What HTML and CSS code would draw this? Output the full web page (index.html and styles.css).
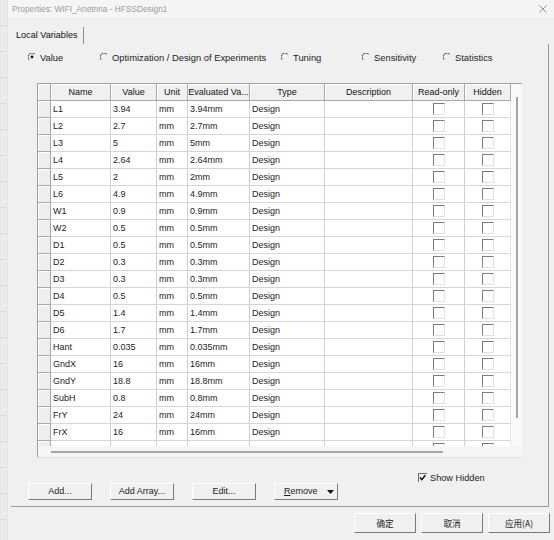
FILE: index.html
```html
<!DOCTYPE html>
<html>
<head>
<meta charset="utf-8">
<title>Properties</title>
<link rel="stylesheet" href="styles.css">
</head>
<body>
<div class="screen">
  <div class="behind"></div>
  <div class="dialog">
    <div class="titlebar">
      <span class="title">Properties: WIFI_Anetnna - HFSSDesign1</span>
      <svg class="close" viewBox="0 0 8 8" width="8" height="8"><path d="M0.5 0.5 L7.5 7.5 M7.5 0.5 L0.5 7.5" stroke="#8a8a8a" stroke-width="0.9" fill="none"/></svg>
    </div>
    <div class="tabs"><div class="tab">Local Variables</div></div>
    <div class="panel">
      <div class="radios">
        <div class="radio r1"><svg viewBox="0 0 8 8" width="8" height="8"><path d="M1.2 6.8 A3.9 3.9 0 0 1 6.8 1.2" stroke="#555" stroke-width="1" fill="none"/><circle cx="4" cy="4" r="1.4" fill="#111"/></svg><span>Value</span></div>
        <div class="radio r2"><svg viewBox="0 0 8 8" width="8" height="8"><path d="M1.2 6.8 A3.9 3.9 0 0 1 6.8 1.2" stroke="#555" stroke-width="1" fill="none"/></svg><span>Optimization / Design of Experiments</span></div>
        <div class="radio r3"><svg viewBox="0 0 8 8" width="8" height="8"><path d="M1.2 6.8 A3.9 3.9 0 0 1 6.8 1.2" stroke="#555" stroke-width="1" fill="none"/></svg><span>Tuning</span></div>
        <div class="radio r4"><svg viewBox="0 0 8 8" width="8" height="8"><path d="M1.2 6.8 A3.9 3.9 0 0 1 6.8 1.2" stroke="#555" stroke-width="1" fill="none"/></svg><span>Sensitivity</span></div>
        <div class="radio r5"><svg viewBox="0 0 8 8" width="8" height="8"><path d="M1.2 6.8 A3.9 3.9 0 0 1 6.8 1.2" stroke="#555" stroke-width="1" fill="none"/></svg><span>Statistics</span></div>
      </div>

      <div class="grid">
        <div class="grid-body">
          <div class="viewport">
            <table class="vars">
              <colgroup>
                <col class="c-rh"><col class="c-name"><col class="c-value"><col class="c-unit"><col class="c-eval"><col class="c-type"><col class="c-desc"><col class="c-ro"><col class="c-hid">
              </colgroup>
              <thead>
                <tr><th class="rh"></th><th>Name</th><th>Value</th><th>Unit</th><th>Evaluated Va...</th><th>Type</th><th>Description</th><th>Read-only</th><th>Hidden</th></tr>
              </thead>
              <tbody>
                <tr><td class="rh"></td><td>L1</td><td>3.94</td><td>mm</td><td>3.94mm</td><td>Design</td><td></td><td class="ck"><span class="cb"></span></td><td class="ck last"><span class="cb"></span></td></tr>
                <tr><td class="rh"></td><td>L2</td><td>2.7</td><td>mm</td><td>2.7mm</td><td>Design</td><td></td><td class="ck"><span class="cb"></span></td><td class="ck last"><span class="cb"></span></td></tr>
                <tr><td class="rh"></td><td>L3</td><td>5</td><td>mm</td><td>5mm</td><td>Design</td><td></td><td class="ck"><span class="cb"></span></td><td class="ck last"><span class="cb"></span></td></tr>
                <tr><td class="rh"></td><td>L4</td><td>2.64</td><td>mm</td><td>2.64mm</td><td>Design</td><td></td><td class="ck"><span class="cb"></span></td><td class="ck last"><span class="cb"></span></td></tr>
                <tr><td class="rh"></td><td>L5</td><td>2</td><td>mm</td><td>2mm</td><td>Design</td><td></td><td class="ck"><span class="cb"></span></td><td class="ck last"><span class="cb"></span></td></tr>
                <tr><td class="rh"></td><td>L6</td><td>4.9</td><td>mm</td><td>4.9mm</td><td>Design</td><td></td><td class="ck"><span class="cb"></span></td><td class="ck last"><span class="cb"></span></td></tr>
                <tr><td class="rh"></td><td>W1</td><td>0.9</td><td>mm</td><td>0.9mm</td><td>Design</td><td></td><td class="ck"><span class="cb"></span></td><td class="ck last"><span class="cb"></span></td></tr>
                <tr><td class="rh"></td><td>W2</td><td>0.5</td><td>mm</td><td>0.5mm</td><td>Design</td><td></td><td class="ck"><span class="cb"></span></td><td class="ck last"><span class="cb"></span></td></tr>
                <tr><td class="rh"></td><td>D1</td><td>0.5</td><td>mm</td><td>0.5mm</td><td>Design</td><td></td><td class="ck"><span class="cb"></span></td><td class="ck last"><span class="cb"></span></td></tr>
                <tr><td class="rh"></td><td>D2</td><td>0.3</td><td>mm</td><td>0.3mm</td><td>Design</td><td></td><td class="ck"><span class="cb"></span></td><td class="ck last"><span class="cb"></span></td></tr>
                <tr><td class="rh"></td><td>D3</td><td>0.3</td><td>mm</td><td>0.3mm</td><td>Design</td><td></td><td class="ck"><span class="cb"></span></td><td class="ck last"><span class="cb"></span></td></tr>
                <tr><td class="rh"></td><td>D4</td><td>0.5</td><td>mm</td><td>0.5mm</td><td>Design</td><td></td><td class="ck"><span class="cb"></span></td><td class="ck last"><span class="cb"></span></td></tr>
                <tr><td class="rh"></td><td>D5</td><td>1.4</td><td>mm</td><td>1.4mm</td><td>Design</td><td></td><td class="ck"><span class="cb"></span></td><td class="ck last"><span class="cb"></span></td></tr>
                <tr><td class="rh"></td><td>D6</td><td>1.7</td><td>mm</td><td>1.7mm</td><td>Design</td><td></td><td class="ck"><span class="cb"></span></td><td class="ck last"><span class="cb"></span></td></tr>
                <tr><td class="rh"></td><td>Hant</td><td>0.035</td><td>mm</td><td>0.035mm</td><td>Design</td><td></td><td class="ck"><span class="cb"></span></td><td class="ck last"><span class="cb"></span></td></tr>
                <tr><td class="rh"></td><td>GndX</td><td>16</td><td>mm</td><td>16mm</td><td>Design</td><td></td><td class="ck"><span class="cb"></span></td><td class="ck last"><span class="cb"></span></td></tr>
                <tr><td class="rh"></td><td>GndY</td><td>18.8</td><td>mm</td><td>18.8mm</td><td>Design</td><td></td><td class="ck"><span class="cb"></span></td><td class="ck last"><span class="cb"></span></td></tr>
                <tr><td class="rh"></td><td>SubH</td><td>0.8</td><td>mm</td><td>0.8mm</td><td>Design</td><td></td><td class="ck"><span class="cb"></span></td><td class="ck last"><span class="cb"></span></td></tr>
                <tr><td class="rh"></td><td>FrY</td><td>24</td><td>mm</td><td>24mm</td><td>Design</td><td></td><td class="ck"><span class="cb"></span></td><td class="ck last"><span class="cb"></span></td></tr>
                <tr><td class="rh"></td><td>FrX</td><td>16</td><td>mm</td><td>16mm</td><td>Design</td><td></td><td class="ck"><span class="cb"></span></td><td class="ck last"><span class="cb"></span></td></tr>
                <tr><td class="rh"></td><td></td><td></td><td></td><td></td><td></td><td></td><td class="ck"><span class="cb"></span></td><td class="ck last"><span class="cb"></span></td></tr>
              </tbody>
            </table>
          </div>
          <div class="vscroll"><div class="vthumb"></div></div>
        </div>
        <div class="hscroll"><div class="hthumb"></div></div>
      </div>

      <div class="showhidden">
        <svg viewBox="0 0 9 9" width="9" height="9"><path d="M0.5 9 V0.5 H9" stroke="#6a6a6a" stroke-width="1" fill="none"/><path d="M2 4.6 L3.8 6.6 L7.3 2.2" stroke="#111" stroke-width="1.5" fill="none"/></svg>
        <span>Show Hidden</span>
      </div>

      <div class="actions">
        <button class="btn">Add...</button>
        <button class="btn">Add Array...</button>
        <button class="btn">Edit...</button>
        <button class="btn remove"><span><u>R</u>emove</span><svg viewBox="0 0 7 4" width="7" height="4"><path d="M0 0 H7 L3.5 4 Z" fill="#111"/></svg></button>
      </div>
    </div>

    <div class="footer">
      <button class="btn fbtn">确定</button>
      <button class="btn fbtn">取消</button>
      <button class="btn fbtn">应用(A)</button>
    </div>
  </div>
</div>
</body>
</html>
```

FILE: styles.css
```css
* { box-sizing: border-box; }

html, body {
  margin: 0;
  padding: 0;
}

body {
  width: 554px;
  height: 540px;
  overflow: hidden;
  background: #f0f0f0;
  font-family: "Liberation Sans", Arial, "Noto Sans CJK SC", sans-serif;
  font-size: 9px;
  color: #1c1c1c;
}

.screen {
  display: flex;
  height: 540px;
}

.behind {
  width: 8px;
  flex: none;
  background: repeating-linear-gradient(to bottom, #ebebeb 0, #ebebeb 25px, #d9d9d9 25px, #d9d9d9 26px);
  border-right: 1px solid #e4e4e4;
}

.dialog {
  flex: 1;
  display: flex;
  flex-direction: column;
  background: #f0f0f0;
}

.titlebar {
  height: 19px;
  display: flex;
  align-items: center;
  justify-content: space-between;
  padding: 0 7px 0 4px;
  background: #f5f5f5;
  border-bottom: 1px solid #ebebeb;
}

.title {
  font-size: 8.3px;
  color: #9c9c9c;
}

.close { display: block; }

.tabs {
  height: 25px;
  padding-left: 3px;
  display: flex;
  align-items: flex-end;
}

.tab {
  width: 73px;
  height: 17px;
  padding-left: 5px;
  border-right: 1px solid #8c8c8c;
  line-height: 16px;
  font-size: 9.1px;
  color: #111;
}

.panel {
  margin-left: 3px;
  width: 538px;
  height: 463px;
  border-right: 1px solid #9a9a9a;
  border-bottom: 1px solid #9a9a9a;
  padding-left: 17px;
}

.radios {
  margin-top: 7px;
  height: 12px;
  display: flex;
  align-items: center;
  font-size: 9.4px;
}

.radio {
  display: flex;
  align-items: center;
  gap: 4px;
}

.radio svg { display: block; flex: none; }

.r1 { width: 72px; }
.r2 { width: 181px; }
.r3 { width: 81px; }
.r4 { width: 81px; }

.grid {
  margin-top: 20px;
  margin-left: 9px;
  width: 485px;
  border-left: 1px solid #a0a0a0;
  border-top: 1px solid #a0a0a0;
  border-bottom: 1px solid #dcdcdc;
  background: #f6f6f6;
}

.grid-body {
  display: flex;
  height: 362px;
}

.viewport {
  width: 473px;
  height: 362px;
  overflow: hidden;
  flex: none;
}

.vscroll {
  flex: 1;
  background: #fafafa;
  padding-left: 5px;
  padding-top: 13px;
}

.vthumb {
  width: 2px;
  height: 321px;
  background: #a6a6a6;
}

.hscroll {
  height: 11px;
  padding-top: 5px;
  padding-left: 13px;
}

.hthumb {
  width: 392px;
  height: 2px;
  background: #a6a6a6;
}

.vars {
  table-layout: fixed;
  border-collapse: separate;
  border-spacing: 0;
  width: 473px;
}

.c-rh { width: 13px; }
.c-name { width: 60px; }
.c-value { width: 46px; }
.c-unit { width: 31px; }
.c-eval { width: 62px; }
.c-type { width: 75px; }
.c-desc { width: 88px; }
.c-ro { width: 52px; }
.c-hid { width: 46px; }

.vars th,
.vars td {
  height: 17px;
  padding: 0 0 0 2px;
  line-height: 16px;
  white-space: nowrap;
  overflow: hidden;
  font-weight: normal;
  text-align: left;
}

.vars th {
  background: #f0f0f0;
  border-right: 1px solid #a8a8a8;
  border-bottom: 1px solid #a8a8a8;
  box-shadow: inset 1px 1px 0 #ffffff;
  text-align: center;
  padding: 0;
  color: #111;
}

.vars td {
  background: #ffffff;
  border-right: 1px solid #cfcfcf;
  border-bottom: 1px solid #d6d6d6;
}

.vars .rh {
  background: #eeeeee;
  border-right: 1px solid #a8a8a8;
  border-bottom: 1px solid #a8a8a8;
  box-shadow: inset 1px 1px 0 #ffffff;
  padding: 0;
}

.vars td.ck {
  text-align: center;
  padding: 0;
}

.vars td.last {
  border-right: 1px solid #e6e6e6;
}

.cb {
  display: inline-block;
  width: 12px;
  height: 12px;
  margin-top: 2px;
  vertical-align: top;
  background: #ffffff;
  border-top: 1px solid #7c7c7c;
  border-left: 1px solid #7c7c7c;
  border-bottom: 1px solid #e2e2e2;
  border-right: 1px solid #e2e2e2;
}

.showhidden {
  margin-top: 14px;
  height: 11px;
  padding-left: 390px;
  display: flex;
  align-items: center;
  gap: 3px;
  font-size: 9.2px;
}

.showhidden svg { display: block; flex: none; }

.actions {
  display: flex;
  gap: 18px;
  height: 17px;
}

.btn {
  width: 64px;
  height: 17px;
  padding: 0;
  margin: 0;
  font-family: "Liberation Sans", Arial, "Noto Sans CJK SC", sans-serif;
  font-size: 9px;
  color: #1c1c1c;
  background: #f0f0f0;
  border-style: solid;
  border-width: 1px;
  border-color: #ffffff #7a7a7a #7a7a7a #ffffff;
  display: flex;
  align-items: center;
  justify-content: center;
  line-height: 1;
}

.remove {
  justify-content: flex-start;
  padding-left: 9px;
  gap: 9px;
}

.remove svg { display: block; }

.footer {
  display: flex;
  justify-content: flex-end;
  gap: 5px;
  padding-top: 6px;
  padding-right: 4px;
}

.fbtn {
  width: 62px;
  height: 20px;
  font-family: "Noto Sans CJK SC", "Liberation Sans", sans-serif;
  font-size: 8.6px;
}
```
